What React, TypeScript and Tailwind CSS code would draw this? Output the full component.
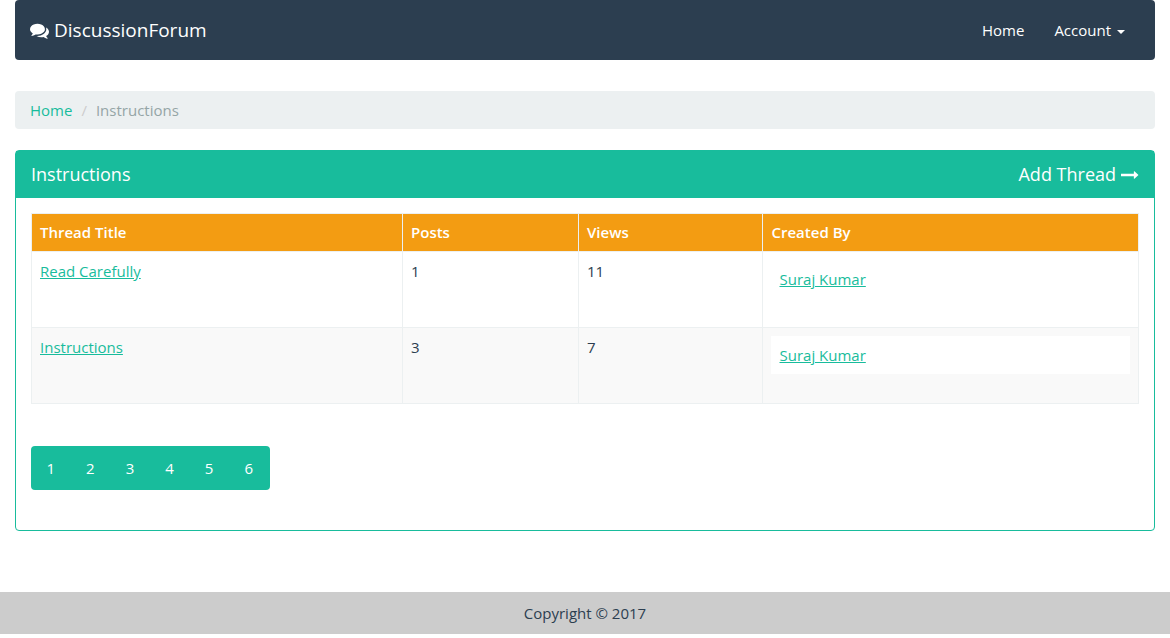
import React from "react";

const threads = [
  { title: "Read Carefully", posts: 1, views: 11, author: "Suraj Kumar" },
  { title: "Instructions", posts: 3, views: 7, author: "Suraj Kumar" },
];

function CommentsIcon() {
  return (
    <svg viewBox="0 0 1792 1792" className="size-[19px] shrink-0" fill="currentColor" aria-hidden="true">
      <path d="M1408 768q0 139-94 257t-256.5 186.5-353.5 68.5q-86 0-176-16-124 88-278 128-36 9-86 16h-3q-11 0-20.5-8t-11.5-21q-1-3-1-6.5t.5-6.5 2-6l2.5-5t3.5-5.5 4-5 4.5-5 4-4.5q5-6 23-25t26-29.5 22.5-29 25-38.5 20.5-44q-124-72-195-177t-71-224q0-139 94-257t256.5-186.5 353.5-68.5 353.5 68.5 256.5 186.5 94 257zm384 256q0 120-71 224.5t-195 176.5q10 24 20.5 44t25 38.5 22.5 29 26 29.5 23 25q1 1 4 4.5t4.5 5 4 5 3.5 5.5l2.5 5t2 6 .5 6.5-1 6.5q-3 14-13 22t-22 7q-50-7-86-16-154-40-278-128-90 16-176 16-271 0-472-132 58 4 88 4 161 0 309-45t264-129q125-92 192-212t67-254q0-77-23-152 129 71 204 178t75 230z" />
    </svg>
  );
}

function ArrowIcon() {
  return (
    <svg viewBox="0 0 1792 1792" className="size-[18px] shrink-0" fill="currentColor" aria-hidden="true">
      <path d="M1728 893q0 14-10 24l-384 354q-16 14-35 6-19-9-19-29v-224h-1248q-14 0-23-9t-9-23v-192q0-14 9-23t23-9h1248v-224q0-21 19-29t35 5l384 350q10 10 10 23z" />
    </svg>
  );
}

export default function App() {
  return (
    <div className="min-h-[638px] bg-white font-['Open_Sans',sans-serif] text-[15px] leading-[21px] text-[#2c3e50]">
      <div className="px-[15px]">
        <nav className="flex h-[60px] items-center justify-between rounded-[4px] bg-[#2c3e50] px-[15px] text-white">
          <a href="#" className="flex items-center gap-[5px] text-[19px]">
            <CommentsIcon />
            <span>DiscussionForum</span>
          </a>
          <div className="flex items-center gap-[30px] pr-[15px]">
            <a href="#">Home</a>
            <a href="#" className="flex items-center gap-[6px]">
              Account
              <span className="mt-[3px] border-x-4 border-t-4 border-x-transparent border-t-white" />
            </a>
          </div>
        </nav>

        <ol className="mt-[31px] flex h-[38px] items-center rounded-[4px] bg-[#ecf0f1] px-[15px]">
          <li><a href="#" className="text-[#18bc9c]">Home</a></li>
          <li className="px-[9px] text-[#cccccc]">/</li>
          <li className="text-[#95a5a6]">Instructions</li>
        </ol>

        <section className="mt-[21px] h-[381px] rounded-[4px] border border-[#18bc9c]">
          <header className="flex h-[47px] items-center justify-between bg-[#18bc9c] px-[15px] text-[18px] text-white">
            <h3>Instructions</h3>
            <a href="#" className="flex items-center gap-[5px]">
              Add Thread
              <ArrowIcon />
            </a>
          </header>
          <div className="p-[15px]">
            <table className="w-full table-fixed border-collapse">
              <colgroup>
                <col className="w-[371px]" />
                <col className="w-[176px]" />
                <col className="w-[184px]" />
                <col />
              </colgroup>
              <thead>
                <tr className="h-[38px] bg-[#f39c12] text-left text-white">
                  {["Thread Title", "Posts", "Views", "Created By"].map((h) => (
                    <th key={h} className="border border-[#ecf0f1] px-2 py-0 font-semibold last:pl-[8.5px]">{h}</th>
                  ))}
                </tr>
              </thead>
              <tbody>
                {threads.map((t) => (
                  <tr key={t.title} className="h-[76px] align-top even:bg-[#f9f9f9]">
                    <td className="border border-[#ecf0f1] px-2 pt-[9px]"><a href="#" className="text-[#18bc9c] underline">{t.title}</a></td>
                    <td className="border border-[#ecf0f1] px-2 pt-[9px]">{t.posts}</td>
                    <td className="border border-[#ecf0f1] px-2 pt-[9px]">{t.views}</td>
                    <td className="border border-[#ecf0f1] p-2">
                      <div className="h-[38px] bg-white pt-[9px] pl-[8.5px]"><a href="#" className="text-[#18bc9c] underline">{t.author}</a></div>
                    </td>
                  </tr>
                ))}
              </tbody>
            </table>
            <ul className="mt-[42px] flex h-[44px] w-[239px] items-center rounded-[4px] bg-[#18bc9c] pr-[1.5px] text-white">
              {[1, 2, 3, 4, 5, 6].map((n) => (
                <li key={n} className="flex-1 text-center"><a href="#">{n}</a></li>
              ))}
            </ul>
          </div>
        </section>
      </div>
      <footer className="mt-[61px] flex h-[42px] items-center justify-center bg-[#cccccc]">Copyright © 2017</footer>
    </div>
  );
}
